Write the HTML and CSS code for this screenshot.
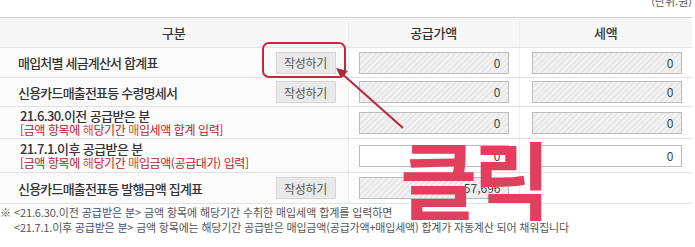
FILE: index.html
```html
<!DOCTYPE html>
<html lang="ko">
<head>
<meta charset="utf-8">
<link rel="stylesheet" href="styles.css">
</head>
<body>
<div class="page">
  <div class="unit">(단위:원)</div>
  <table class="grid">
    <colgroup><col class="c1"><col class="c2"><col class="c3"></colgroup>
    <thead>
      <tr class="head"><th>구분</th><th>공급가액</th><th>세액</th></tr>
    </thead>
    <tbody>
      <tr class="r1">
        <td class="label"><div class="lab"><span>매입처별 세금계산서 합계표</span><button class="btn">작성하기</button></div></td>
        <td class="val"><div class="inp ro">0</div></td>
        <td class="val v3"><div class="inp ro">0</div></td>
      </tr>
      <tr class="r2">
        <td class="label"><div class="lab"><span>신용카드매출전표등 수령명세서</span><button class="btn">작성하기</button></div></td>
        <td class="val"><div class="inp ro">0</div></td>
        <td class="val v3"><div class="inp ro">0</div></td>
      </tr>
      <tr class="r3">
        <td class="label"><div class="two">21.6.30.이전 공급받은 분<br><span class="red">[금액 항목에 <span class="hl">해</span>당기간 <span class="hl">매</span>입세액 합계 입력]</span></div></td>
        <td class="val"><div class="inp ro">0</div></td>
        <td class="val v3"><div class="inp ro">0</div></td>
      </tr>
      <tr class="r4">
        <td class="label"><div class="two">21.7.1.이후 공급받은 분<br><span class="red">[금액 항목에 <span class="hl">해</span>당기간 <span class="hl">매</span>입금액(공급대가) 입력]</span></div></td>
        <td class="val"><div class="inp">0</div></td>
        <td class="val v3"><div class="inp">0</div></td>
      </tr>
      <tr class="r5">
        <td class="label"><div class="lab"><span>신용카드매출전표등 발행금액 집계표</span><button class="btn">작성하기</button></div></td>
        <td class="val"><div class="inp ro">57,696</div></td>
        <td class="val v3"></td>
      </tr>
    </tbody>
  </table>
  <div class="notes">
    <p class="n1">※ &lt;21.6.30.이전 <span class="b">공급받은 분</span>&gt; 금액 항목에 해당기간 수취한 매입세액 합계를 입력하면</p>
    <p class="n2">&lt;21.7.1.이후 <span class="b">공급받은 분</span>&gt; 금액 항목에는 해당기간 공급받은 매입금액(공급가액+매입세액) 합계가 자동계산 되어 채워집니다</p>
  </div>

  <div class="callout"></div>
  <svg class="arrow" width="695" height="247" viewBox="0 0 695 247">
    <line x1="403" y1="128" x2="340" y2="72" stroke="#b3263a" stroke-width="2"/>
    <polygon points="336,68 348,71 341,78" fill="#b3263a"/>
  </svg>
  <div class="click">클릭</div>
</div>
</body>
</html>
```
FILE: styles.css
```css
html, body { margin: 0; padding: 0; background: #fff; }
body { font-family: "Noto Sans CJK KR", "Noto Sans", sans-serif; color: #333; }
.page { position: relative; width: 695px; height: 247px; overflow: hidden; }
.unit { height: 22px; margin-top: -5px; text-align: right; font-size: 11px; line-height: 12px; color: #555; padding-right: 3px; box-sizing: border-box; }
.grid { width: 692px; border-collapse: collapse; table-layout: fixed; font-size: 13px; }
.c1 { width: 348px; } .c2 { width: 171px; } .c3 { width: 173px; }
.grid th, .grid td { padding: 0; border-bottom: 1px solid #e2e2e2; border-right: 1px solid #ececec; }
.grid th:last-child, .grid td:last-child { border-right: none; }
.grid thead th { border-top: 1px solid #cfcfcf; height: 29px; background: #f7f7f7; font-weight: 500; color: #333; letter-spacing: -0.3px; }
.label { background: #fbfbfb; }
.lab { display: flex; align-items: center; justify-content: space-between; padding: 0 12px 0 18px; }
.lab span { letter-spacing: -0.8px; font-weight: 500; }
.two { padding-left: 20px; line-height: 14px; letter-spacing: -0.6px; font-weight: 500; }
.red { color: #b8242c; font-size: 12px; letter-spacing: -0.4px; font-weight: 400; }
.hl { color: #d9532b; }
.r1 td { height: 29px; } .r2 td { height: 28px; } .r3 td { height: 31px; } .r4 td { height: 33px; } .r5 td { height: 30px; }
.btn { width: 60px; height: 22px; border: 1px solid #d6d6d6; background: #e9e9e9; color: #555; font-family: inherit; font-size: 12px; letter-spacing: -0.3px; padding: 0; }
.val { padding-left: 10px !important; }
.v3 { padding-left: 12px !important; }
.inp { width: 150px; height: 22px; box-sizing: border-box; border: 1px solid #bcbcbc; text-align: right; padding-right: 7px; line-height: 20px; font-size: 12px; letter-spacing: 0; color: #444; background: #fff; }
.inp.ro { background: repeating-linear-gradient(-45deg, #f2f2f2 0 2px, #e8e8e8 2px 4px); }
.notes { font-size: 11px; color: #555; letter-spacing: -0.1px; }
.notes p { margin: 0; line-height: 15px; }
.n1 { padding-top: 1px; }
.n2 { padding-left: 14px; letter-spacing: -0.2px; }
.b { color: #3c4a78; }
.callout { position: absolute; left: 262px; top: 42px; width: 80px; height: 32px; border: 2px solid #c4283d; border-radius: 7px; }
.arrow { position: absolute; left: 0; top: 0; }
.click { position: absolute; left: 400px; top: 127px; font-size: 84px; line-height: 100px; font-weight: 700; color: #e0405e; letter-spacing: -4px; }
```
